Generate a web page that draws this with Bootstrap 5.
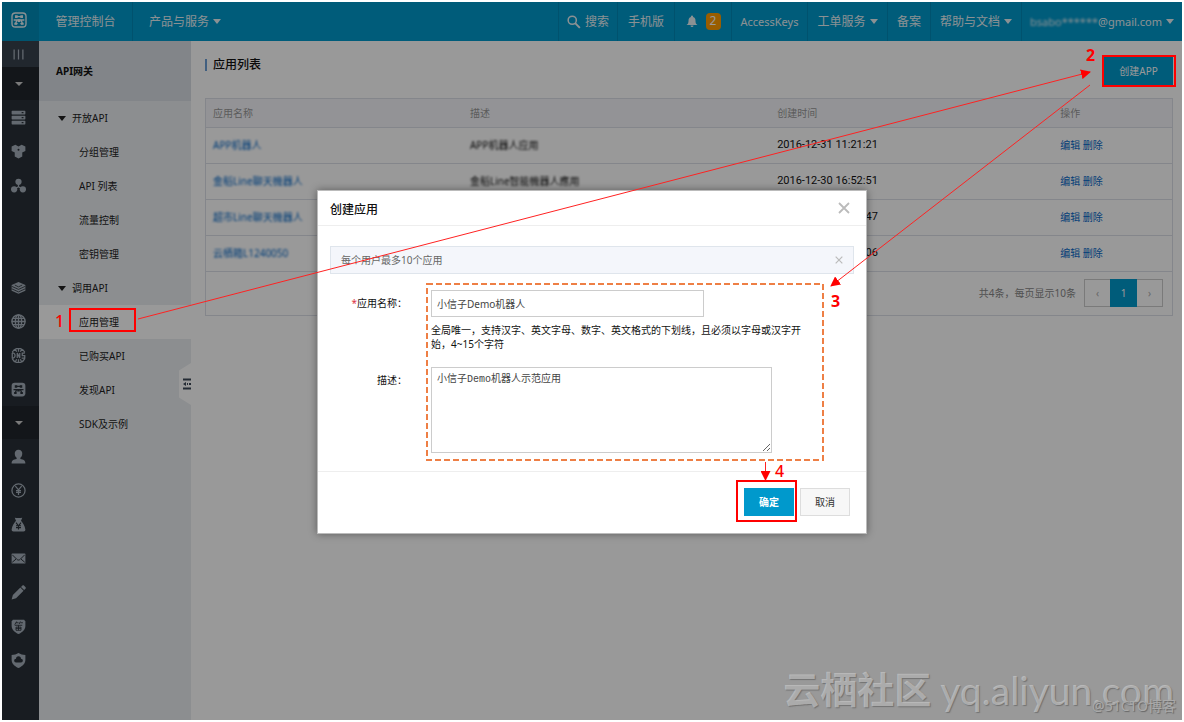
<!DOCTYPE html>
<html lang="zh-CN">
<head>
<meta charset="utf-8">
<meta name="viewport" content="width=device-width, initial-scale=1">
<title>API网关 - 应用管理</title>
<link href="https://cdn.jsdelivr.net/npm/bootstrap@5.3.0/dist/css/bootstrap.min.css" rel="stylesheet">
<style>
body{font-family:"Noto Sans","Noto Sans CJK SC",sans-serif;font-size:10px;line-height:14px;color:#111;background:#fff}
a{text-decoration:none}
.frame{margin:2px;min-height:calc(100vh - 4px)}
.topbar{height:39px;background:#09c;font-size:12px;line-height:16px}
.topbar a{color:#e8f2f6}
.topbar a.latin{font-size:11px}
.logo-cell{width:37px;background:#008cba;padding-right:4px;padding-bottom:4px}
.brand-link{width:94px;border-right:1px solid #0089b8}
.tools{display:grid;grid-template-columns:59px 57px 57px 76px 80px 43px 91px 161px}
.tools>a{border-left:1px solid #0089b8}
.caret{width:0;height:0;border:4px solid transparent;border-top:5px solid currentColor;border-bottom:0}
.caret-rail{border-width:4px 4px 0;color:#ccc}
.count{background:#ff9c00;color:#fff;border-radius:4px;width:15px;height:17px}
.rail{width:37px;background:#293038}
.rail a{height:34px;color:#a6b0bb;padding-right:4px}
.rail a.fold{height:33px;background:#20262c;color:#fff}
.rail a.bars{height:26px;background:#37414e}
.rail .vacant{height:68px}
.rail svg{width:15px;height:15px}
.side{width:152px;background:#eaedf1}
.side h1{height:60px;background:#d9dee4;font-size:10px;line-height:14px;font-weight:700;padding-left:17px}
.side a{height:34px;color:#222;padding-left:40px}
.side a.group{padding-left:19px;gap:6px}
.side a.on{background:#fff}
.handle{right:0;top:322px;width:12px;height:42px;background:#fff;clip-path:polygon(0 18%,100% 0,100% 100%,0 82%)}
.content{padding:16px 9px 20px 14px}
.page-title{font-size:12px;line-height:12px;border-left:2px solid #6d9fd5;padding-left:6px;margin-top:2px}
.btn{--bs-btn-border-radius:0;--bs-btn-font-size:10px;--bs-btn-padding-x:0;--bs-btn-padding-y:0;line-height:14px;height:28px}
.btn-cloud{background:#09c;color:#fff;border-color:#09c}
.btn-plain{background:#f7f7f7;border-color:#ddd;color:#333}
.btn-app{width:69px}
.btn-dialog{width:50px}
.listing{border:1px solid #dde0e8;margin-top:13px;isolation:isolate}
.listing .table{--bs-table-bg:transparent;table-layout:fixed}
.listing th{height:28px;padding:0 7px;font-weight:400;color:#999;background:#f5f6fa;border-color:#dde0e8;vertical-align:middle}
.listing td{height:36px;padding:0 7px;color:#111;border-color:#dde0e8}
.listing a{color:#0668c8}
.listing td.stamp{font-family:Roboto,"Noto Sans",sans-serif;font-size:11px}
.veil{filter:blur(1px)}
.pager{height:43px;padding-right:9px;color:#888}
.pager .pagination{--bs-pagination-border-radius:0}
.pager .page-link{font-size:10px;line-height:14px;padding:6px 0;width:27px;text-align:center;color:#aaa;border-color:#ccc;background:none}
.pager .active>.page-link{background:#09c;border-color:#09c;color:#fff}
.shade{inset:0;background:rgba(0,0,0,.4)}
.stage{left:0;right:0;top:188px}
.dialog{width:550px;background:#fff;border:1px solid #bbb;box-shadow:0 0 8px rgba(0,0,0,.4)}
.dialog-head{height:35px;padding:3px 16px 0 12px;border-bottom:1px solid #eee}
.dialog-head h2{font-size:12px;line-height:16px}
.dialog-body{padding:20px 12px 18px}
.dialog-foot{border-top:1px solid #eee;padding:16px 16px 17px 0;gap:6px}
.note{height:28px;background:#f4f6fb;border:1px solid #dfe5ec;color:#666;padding:0 10px}
.x-btn{border:0;background:none;padding:0;color:#bbb;display:flex}
.label-col{width:77px;padding-top:6px}
.field-zone{width:378px}
.hint{margin:6px 0 0}
.form-control{border-radius:0;border-color:#ccc;font-size:10px;line-height:14px;padding:5px;color:#444}
.name-box{width:273px;height:27px}
.desc-box{width:341px;height:86px;font-family:"Liberation Mono","Noto Sans CJK SC",monospace}
.marks{inset:0;width:100%;height:100%;pointer-events:none}
.marks text{font-family:"Noto Sans",sans-serif;font-size:16px;font-weight:700;fill:red}
.marks text.thin{font-weight:500}
.watermark{right:8px;bottom:6px;color:rgba(205,205,205,.65);text-shadow:1px 1px 1px rgba(90,90,90,.6);gap:9px;line-height:48px;font-size:37px}
.watermark .site{font-family:Lato,"Noto Sans",sans-serif;font-size:39px}
.credit{right:6px;bottom:6px;font-size:14px;line-height:16px;color:#aaa;text-shadow:1px 1px 1px #666}
</style>
</head>
<body>
<svg class="d-none" aria-hidden="true">
  <symbol id="i-cloud" viewBox="0 0 24 24"><rect x="1.5" y="1.5" width="21" height="21" rx="5" fill="none" stroke="currentColor" stroke-width="2"/><path d="M7 7h10M4 12h16M8 17l-1-1M6 17.500h4M14 17.500h4M9 12l-2 5M15 12l2 5" fill="none" stroke="currentColor" stroke-width="2"/><path d="M6 5h4v4H6zM14 5h4v4h-4zM10 11h4v4h-4zM5 16h4v3H5zM15 16h4v3h-4z" fill="currentColor"/></symbol>
  <symbol id="i-search" viewBox="0 0 24 24"><circle cx="9" cy="9" r="7" fill="none" stroke="currentColor" stroke-width="2.6"/><path d="M14 14l8 8" stroke="currentColor" stroke-width="3.4"/></symbol>
  <symbol id="i-bell" viewBox="0 0 24 24"><path d="M12 0a2 2 0 0 1 2 3c4 1 5 4 5 8 0 4 1 6 4 8H1c3-2 4-4 4-8 0-4 1-7 5-8a2 2 0 0 1 2-3zM9 20h6a3 3 0 0 1-6 0z" fill="currentColor"/></symbol>
  <symbol id="i-bars" viewBox="0 0 24 24"><path d="M5 4v16M12 4v16M19 4v16" stroke="currentColor" stroke-width="2"/></symbol>
  <symbol id="i-server" viewBox="0 0 24 24"><path fill-rule="evenodd" d="M2 1h20a1 1 0 0 1 1 1v4a1 1 0 0 1-1 1H2a1 1 0 0 1-1-1V2a1 1 0 0 1 1-1zm15 2v2h3V3zM2 9h20a1 1 0 0 1 1 1v4a1 1 0 0 1-1 1H2a1 1 0 0 1-1-1v-4a1 1 0 0 1 1-1zm15 2v2h3v-2zM2 17h20a1 1 0 0 1 1 1v4a1 1 0 0 1-1 1H2a1 1 0 0 1-1-1v-4a1 1 0 0 1 1-1zm15 2v2h3v-2z" fill="currentColor"/></symbol>
  <symbol id="i-hex" viewBox="0 0 24 24"><g fill="currentColor"><path d="M7 1l5 3v7l-5 3-6-3V4zM17 1l6 3v7l-6 3-5-3V4zM12 10l6 3v7l-6 3-6-3v-7z"/></g><circle cx="12" cy="9" r="1.6" fill="#293038"/></symbol>
  <symbol id="i-node" viewBox="0 0 24 24"><g fill="currentColor"><circle cx="12" cy="6" r="5"/><circle cx="5" cy="18" r="5"/><circle cx="19" cy="18" r="5"/></g><path d="M12 8v6l-7 4M12 14l7 4" fill="none" stroke="currentColor" stroke-width="2"/></symbol>
  <symbol id="i-stack" viewBox="0 0 24 24"><path d="M12 3l11 5v9l-11 5-11-5V8z" fill="currentColor"/><path d="M1 10l11 5 11-5M1 14l11 5 11-5M6 8l6 3 6-3" fill="none" stroke="#293038" stroke-width="1.3"/></symbol>
  <symbol id="i-globe" viewBox="0 0 24 24"><g fill="none" stroke="currentColor" stroke-width="2.2"><circle cx="12" cy="12" r="10.5"/><ellipse cx="12" cy="12" rx="5" ry="10.5"/><path d="M12 1v22M1 12h22M3 7h18M3 17h18"/></g></symbol>
  <symbol id="i-dns" viewBox="0 0 24 24"><path d="M2 7a11 11 0 0 1 20 0M2 17a11 11 0 0 0 20 0M12 1v5M12 18v5M7 2l2 4M17 2l-2 4M7 22l2-4M17 22l-2-4M2 8v8c6 1 6-9 0-8M10 16V8l4 8V8M22 8h-4v4h4v4h-5" fill="none" stroke="currentColor" stroke-width="2"/></symbol>
  <symbol id="i-gate" viewBox="0 0 24 24"><rect x="1" y="1" width="22" height="22" rx="5" fill="currentColor"/><path d="M7 7h10M4 12h16M9 12l-2 5M15 12l2 5" fill="none" stroke="#293038" stroke-width="2"/><path d="M6 5h4v4H6zM14 5h4v4h-4zM10 11h4v4h-4zM5 16h4v3H5zM15 16h4v3h-4z" fill="#293038"/></symbol>
  <symbol id="i-user" viewBox="0 0 24 24"><path d="M12 1c4 0 6 3 6 6 0 4-2 6-3 7v2c5 1 8 2 8 7H1c0-5 3-6 8-7v-2c-1-1-3-3-3-7 0-3 2-6 6-6z" fill="currentColor"/></symbol>
  <symbol id="i-yen" viewBox="0 0 24 24"><circle cx="12" cy="12" r="10.500" fill="none" stroke="currentColor" stroke-width="2"/><path d="M7 5l5 6 5-6M12 11v8M8 12h8M8 15h8" fill="none" stroke="currentColor" stroke-width="2"/></symbol>
  <symbol id="i-bag" viewBox="0 0 24 24"><path d="M6 1c3 1 9 1 12 0l-2 5c3 3 6 8 7 14 0 2-1 3-3 3H4c-2 0-3-1-3-3C2 14 5 9 8 6z" fill="currentColor"/><path d="M8 9l4 5 4-5M12 14v6M8 14h8M8 17h8" fill="none" stroke="#293038" stroke-width="1.8"/></symbol>
  <symbol id="i-mail" viewBox="0 0 24 24"><rect x="1" y="4" width="22" height="16" rx="1" fill="currentColor"/><path d="M2 6l7 7c2 2 4 2 6 0l7-7M2 18l6-5M22 18l-6-5" fill="none" stroke="#293038" stroke-width="1.6"/></symbol>
  <symbol id="i-pen" viewBox="0 0 24 24"><path d="M1 23l2-7L15 4l5 5L8 21zM16 3l2-2c1-1 2-1 3 0l2 2c1 1 1 2 0 3l-2 2z" fill="currentColor"/></symbol>
  <symbol id="i-shield" viewBox="0 0 24 24"><path d="M3 1h18l2 3v7c0 6-5 10-11 13C6 21 1 17 1 11V4z" fill="currentColor"/><path d="M9 4L6 9M8 6h4M15 4l-2 4M15 6h4M6 10h12M8 13h8v5H8zM12 10v8M8 15h8" fill="none" stroke="#293038" stroke-width="1.4"/></symbol>
  <symbol id="i-shield-cloud" viewBox="0 0 24 24"><path d="M12 0c3 2 7 3 11 3v8c0 6-5 10-11 13C6 21 1 17 1 11V3c4 0 8-1 11-3z" fill="currentColor"/><path d="M8 15a3 3 0 0 1 0-6 4 4 0 0 1 8 0 3 3 0 0 1 0 6z" fill="#293038"/></symbol>
  <symbol id="i-x" viewBox="0 0 12 12"><path d="M1 1l10 10M11 1L1 11" fill="none" stroke="currentColor" stroke-width="1.8"/></symbol>
</svg>

<div class="frame position-relative d-flex flex-column overflow-hidden">
  <header class="topbar d-flex">
    <a href="#" class="logo-cell d-flex align-items-center justify-content-center" aria-label="首页"><svg width="16" height="16"><use href="#i-cloud"/></svg></a>
    <a href="#" class="brand-link d-flex align-items-center justify-content-center">管理控制台</a>
    <a href="#" class="d-flex align-items-center gap-1 ps-3">产品与服务<span class="caret"></span></a>
    <nav class="tools ms-auto" aria-label="工具">
      <a href="#" class="d-flex align-items-center justify-content-center gap-1"><svg width="14" height="14"><use href="#i-search"/></svg>搜索</a>
      <a href="#" class="d-flex align-items-center justify-content-center">手机版</a>
      <a href="#" class="d-flex align-items-center justify-content-center gap-2"><svg width="12" height="13"><use href="#i-bell"/></svg><span class="count text-center">2</span></a>
      <a href="#" class="latin d-flex align-items-center justify-content-center">AccessKeys</a>
      <a href="#" class="d-flex align-items-center justify-content-center gap-1">工单服务<span class="caret"></span></a>
      <a href="#" class="d-flex align-items-center justify-content-center">备案</a>
      <a href="#" class="d-flex align-items-center justify-content-center gap-1">帮助与文档<span class="caret"></span></a>
      <a href="#" class="latin d-flex align-items-center justify-content-end gap-1 pe-2"><span><span class="veil d-inline-block">bsabo******</span>@gmail.com</span><span class="caret"></span></a>
    </nav>
  </header>

  <div class="d-flex flex-grow-1">
    <nav class="rail flex-shrink-0" aria-label="产品">
      <a href="#" class="bars d-flex align-items-center justify-content-center"><svg><use href="#i-bars"/></svg></a>
      <a href="#" class="fold d-flex align-items-center justify-content-center"><span class="caret caret-rail"></span></a>
      <a href="#" class="d-flex align-items-center justify-content-center"><svg><use href="#i-server"/></svg></a>
      <a href="#" class="d-flex align-items-center justify-content-center"><svg><use href="#i-hex"/></svg></a>
      <a href="#" class="d-flex align-items-center justify-content-center"><svg><use href="#i-node"/></svg></a>
      <div class="vacant"></div>
      <a href="#" class="d-flex align-items-center justify-content-center"><svg><use href="#i-stack"/></svg></a>
      <a href="#" class="d-flex align-items-center justify-content-center"><svg><use href="#i-globe"/></svg></a>
      <a href="#" class="d-flex align-items-center justify-content-center"><svg><use href="#i-dns"/></svg></a>
      <a href="#" class="d-flex align-items-center justify-content-center"><svg><use href="#i-gate"/></svg></a>
      <a href="#" class="fold d-flex align-items-center justify-content-center"><span class="caret caret-rail"></span></a>
      <a href="#" class="d-flex align-items-center justify-content-center"><svg><use href="#i-user"/></svg></a>
      <a href="#" class="d-flex align-items-center justify-content-center"><svg><use href="#i-yen"/></svg></a>
      <a href="#" class="d-flex align-items-center justify-content-center"><svg><use href="#i-bag"/></svg></a>
      <a href="#" class="d-flex align-items-center justify-content-center"><svg><use href="#i-mail"/></svg></a>
      <a href="#" class="d-flex align-items-center justify-content-center"><svg><use href="#i-pen"/></svg></a>
      <a href="#" class="d-flex align-items-center justify-content-center"><svg><use href="#i-shield"/></svg></a>
      <a href="#" class="d-flex align-items-center justify-content-center"><svg><use href="#i-shield-cloud"/></svg></a>
    </nav>

    <aside class="side flex-shrink-0 position-relative">
      <h1 class="d-flex align-items-center m-0">API网关</h1>
      <nav aria-label="API网关">
        <a href="#" class="group d-flex align-items-center"><span class="caret"></span>开放API</a>
        <a href="#" class="d-flex align-items-center">分组管理</a>
        <a href="#" class="d-flex align-items-center">API 列表</a>
        <a href="#" class="d-flex align-items-center">流量控制</a>
        <a href="#" class="d-flex align-items-center">密钥管理</a>
        <a href="#" class="group d-flex align-items-center"><span class="caret"></span>调用API</a>
        <a href="#" class="on d-flex align-items-center" aria-current="page">应用管理</a>
        <a href="#" class="d-flex align-items-center">已购买API</a>
        <a href="#" class="d-flex align-items-center">发现API</a>
        <a href="#" class="d-flex align-items-center">SDK及示例</a>
      </nav>
      <div class="handle position-absolute d-flex align-items-center justify-content-end"><svg width="8" height="12"><path d="M0 1.500h8M0 10.500h8M4 6h1M6 6h2" stroke="#3c4858" stroke-width="2"/><path d="M0 6l3-2v4z" fill="#3c4858"/></svg></div>
    </aside>

    <main class="content flex-grow-1">
      <div class="d-flex align-items-start justify-content-between">
        <h2 class="page-title mb-0">应用列表</h2>
        <button type="button" class="btn btn-cloud btn-app">创建APP</button>
      </div>
      <div class="listing">
        <table class="table align-middle mb-0">
          <colgroup><col style="width:26.6%"><col style="width:31.8%"><col style="width:29.3%"><col></colgroup>
          <thead><tr><th>应用名称</th><th>描述</th><th>创建时间</th><th>操作</th></tr></thead>
          <tbody>
            <tr><td><a href="#" class="veil d-inline-block">APP机器人</a></td><td><span class="veil d-inline-block">APP机器人应用</span></td><td class="stamp">2016-12-31 11:21:21</td><td><a href="#">编辑</a> <a href="#">删除</a></td></tr>
            <tr><td><a href="#" class="veil d-inline-block">金稻Line聊天機器人</a></td><td><span class="veil d-inline-block">金稻Line智能機器人應用</span></td><td class="stamp">2016-12-30 16:52:51</td><td><a href="#">编辑</a> <a href="#">删除</a></td></tr>
            <tr><td><a href="#" class="veil d-inline-block">超市Line聊天機器人</a></td><td></td><td class="stamp">2016-12-30 16:50:47</td><td><a href="#">编辑</a> <a href="#">删除</a></td></tr>
            <tr><td><a href="#" class="veil d-inline-block">云栖箱L1240050</a></td><td></td><td class="stamp">2016-12-30 16:46:06</td><td><a href="#">编辑</a> <a href="#">删除</a></td></tr>
          </tbody>
        </table>
        <div class="pager d-flex align-items-center justify-content-end gap-2">
          <span>共4条，每页显示10条</span>
          <ul class="pagination mb-0">
            <li class="page-item"><a class="page-link" href="#" aria-label="上一页">‹</a></li>
            <li class="page-item active"><a class="page-link" href="#">1</a></li>
            <li class="page-item"><a class="page-link" href="#" aria-label="下一页">›</a></li>
          </ul>
        </div>
      </div>
    </main>
  </div>

  <div class="shade position-absolute"></div>

  <div class="watermark position-absolute d-flex"><span class="fw-bold">云栖社区</span><span class="site">yq.aliyun.com</span></div>
  <div class="credit position-absolute">@51CTO博客</div>

  <div class="stage position-absolute d-flex justify-content-center">
    <form class="dialog" role="dialog" aria-labelledby="dlg-title">
      <div class="dialog-head d-flex align-items-center justify-content-between">
        <h2 id="dlg-title" class="m-0">创建应用</h2>
        <button type="button" class="x-btn pb-1" aria-label="关闭"><svg width="12" height="12"><use href="#i-x"/></svg></button>
      </div>
      <div class="dialog-body">
        <div class="note d-flex align-items-center justify-content-between">
          <span>每个用户最多10个应用</span>
          <button type="button" class="x-btn" aria-label="关闭提示"><svg width="8" height="8"><use href="#i-x"/></svg></button>
        </div>
        <div class="d-flex pt-3">
          <label for="app-name" class="label-col text-end"><span class="text-danger">*</span>应用名称：</label>
          <div class="field-zone ms-4">
            <input id="app-name" type="text" class="form-control name-box" value="小信子Demo机器人">
            <p class="hint">全局唯一，支持汉字、英文字母、数字、英文格式的下划线，且必须以字母或汉字开始，4~15个字符</p>
          </div>
        </div>
        <div class="d-flex pt-3">
          <label for="app-desc" class="label-col text-end">描述：</label>
          <div class="field-zone ms-4"><textarea id="app-desc" class="form-control desc-box">小信子Demo机器人示范应用</textarea></div>
        </div>
      </div>
      <div class="dialog-foot d-flex justify-content-end">
        <button type="button" class="btn btn-cloud btn-dialog fw-bold">确定</button>
        <button type="button" class="btn btn-plain btn-dialog">取消</button>
      </div>
    </form>
  </div>
</div>

<svg class="marks position-absolute" aria-hidden="true">
  <defs><marker id="tip" viewBox="0 0 10 10" refX="9" refY="5" markerWidth="10" markerHeight="10" markerUnits="userSpaceOnUse" orient="auto"><path d="M0 0l10 5-10 5z" fill="red"/></marker></defs>
  <g fill="none" stroke="red" stroke-width="2">
    <rect x="70" y="309" width="65" height="22"/>
    <rect x="1103" y="56" width="72" height="30"/>
    <rect x="737" y="481" width="59" height="40"/>
  </g>
  <g stroke="#f22" stroke-width="1">
    <path d="M138 319L1090 72" marker-end="url(#tip)"/>
    <path d="M1090 85L831 286" marker-end="url(#tip)"/>
    <path d="M765.500 462V480" marker-end="url(#tip)"/>
  </g>
  <rect x="427" y="284" width="396" height="176" fill="none" stroke="#ee7f45" stroke-width="2" stroke-dasharray="6 3"/>
  <text class="thin" x="55" y="327">1</text><text x="1086" y="61">2</text><text x="831" y="307">3</text><text class="thin" x="775" y="477">4</text>
</svg>
<script src="https://cdn.jsdelivr.net/npm/bootstrap@5.3.0/dist/js/bootstrap.bundle.min.js"></script>
</body>
</html>
